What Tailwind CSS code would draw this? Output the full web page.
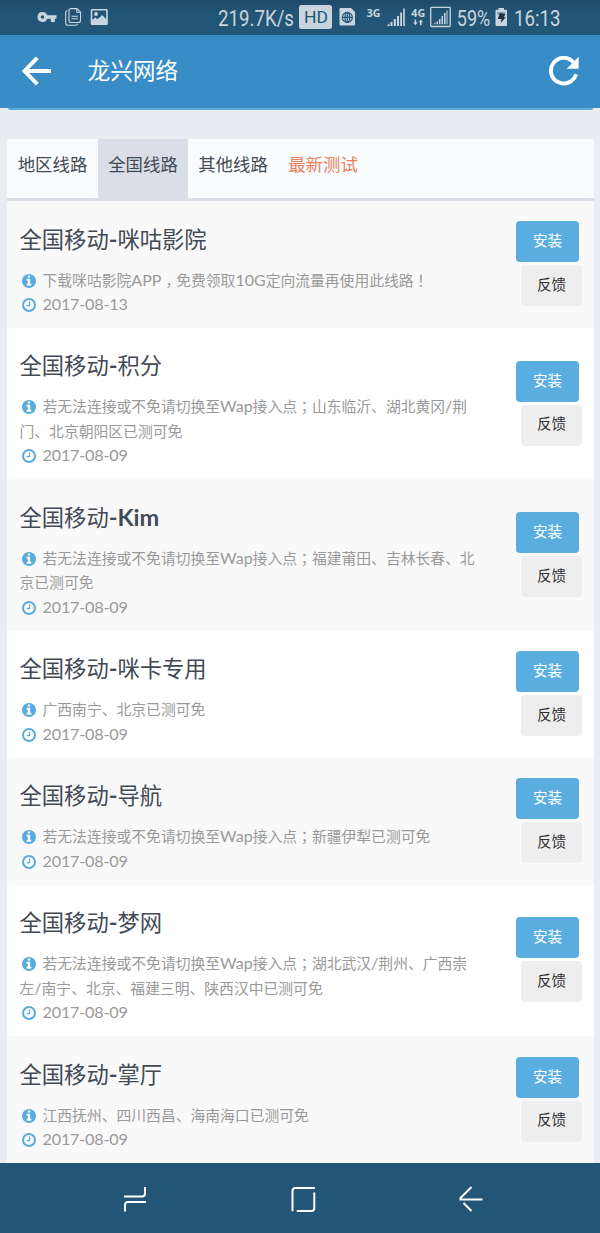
<!DOCTYPE html>
<html lang="zh-CN">
<head>
  <meta charset="UTF-8" />
  <meta name="viewport" content="width=device-width, initial-scale=1.0" />
  <title>龙兴网络</title>
  <script src="https://cdn.jsdelivr.net/npm/@tailwindcss/browser@4"></script>
</head>
<body class="w-[600px] h-[1233px] overflow-hidden flex flex-col bg-[#e9edf2] font-['Lato','Noto_Sans_CJK_SC',sans-serif] text-[#434a54]">

  <!-- status bar -->
  <div class="h-[35px] shrink-0 flex justify-between bg-linear-to-b from-[#1f4a68] to-[#235577] to-40%">
    <svg width="120" height="35" viewBox="0 0 120 35" fill="#c8d5df">
      <path fill-rule="evenodd" d="M42.5 12a5 5 0 1 0 4.7 6.8h3.6V22h4v-3.200h1.700v-3.600h-9.300A5 5 0 0 0 42.500 12zm0 3.200a1.800 1.800 0 1 1 0 3.600 1.800 1.800 0 0 1 0-3.600z" />
      <g fill="none" stroke="#c8d5df" stroke-width="1.100">
        <path d="M71 8.600h6l3.500 3.700v8.200q0 2-2 2h-7.500q-2 0-2-2v-9.900q0-2 2-2z" />
        <path d="M76.800 8.600v3.700h3.700M67.500 10.500q-1.800.3-1.800 2v10.700q0 2 2 2h7.800q1.800 0 2-1.500" />
        <path d="M71.500 16.200h6.500M71.500 18.800h6.500" />
      </g>
      <path fill-rule="evenodd" d="M92 9h14.500q1.300 0 1.300 1.300v13.400q0 1.300-1.300 1.300H92q-1.300 0-1.300-1.300V10.300Q90.700 9 92 9zm.3 1.600v9.500l3-2.600 2.200 1.800 4.700-4.300 4 4.200v-8.600z" />
      <circle cx="96" cy="14" r="1.900" />
    </svg>
    <svg width="390" height="35" viewBox="210 0 390 35" fill="#c8d5df" class="font-['Roboto',sans-serif]">
      <text transform="translate(218 25.5) scale(.85 1)" font-size="22" textLength="89.4" lengthAdjust="spacingAndGlyphs">219.7K/s</text>
      <rect x="299" y="5" width="33" height="24" rx="2.500" />
      <text x="304" y="22.800" font-size="16.500" textLength="24" lengthAdjust="spacingAndGlyphs" fill="#235577">HD</text>
      <path d="M340.500 8h10.500l4 4v12.500q0 1-1 1h-13.500q-1 0-1-1V9q0-1 1-1z" />
      <g fill="none" stroke="#235577" stroke-width="1.200">
        <circle cx="347.300" cy="17.400" r="5" />
        <ellipse cx="347.300" cy="17.400" rx="2.300" ry="5" />
        <path d="M342.300 17.400h10M347.300 12.400v10" />
      </g>
      <text x="366.700" y="17" font-size="10.500" font-weight="700" textLength="13.600" lengthAdjust="spacingAndGlyphs" class="font-['Noto_Sans']">3G</text>
      <path d="M387 26l2.500-3v3zM390.500 22h2v4h-2zM393.800 19h2v7h-2zM397 16h2v10h-2zM400.200 12.500h1.800V26h-1.800zM403.200 8.500h1.600V26h-1.600z" />
      <text x="411.300" y="17" font-size="10.500" font-weight="700" textLength="13.800" lengthAdjust="spacingAndGlyphs" class="font-['Noto_Sans']">4G</text>
      <path d="M414.600 19.500h1.600v3h1.500l-2.300 2.700-2.300-2.700h1.500zM420 25.200h1.600v-3h1.500l-2.300-2.700-2.300 2.700h1.500z" />
      <rect x="430.700" y="7.300" width="19.500" height="19.200" rx=".8" fill="none" stroke="#c8d5df" stroke-width="1.300" />
      <path d="M433.500 24.300l2-2v2zM436.500 21.500h1.500v2.800h-1.500zM439 19h1.500v5.300H439zM441.500 16h1.500v8.300h-1.500zM444 13h1.500v11.300H444zM446.500 10.500h1v13.800h-1z" />
      <text x="456.800" y="25.500" font-size="22" textLength="33.500" lengthAdjust="spacingAndGlyphs">59%</text>
      <path d="M498.500 8h5.500v1.800h2.200q.8 0 .8.800v14.600q0 .8-.8.800h-9.900q-.8 0-.8-.8V10.600q0-.8.800-.8h2.200z" />
      <path d="M497.300 12h8v3h-8z" fill="#8199aa" />
      <path d="M500 13l5.300 1.200-1.300 3h1.800l-5.300 6 1-4.300h-3.800z" fill="#1f3442" />
      <text x="514" y="25.500" font-size="22" textLength="46.500" lengthAdjust="spacingAndGlyphs">16:13</text>
    </svg>
  </div>

  <!-- title bar -->
  <header class="h-[72.5px] shrink-0 flex items-center pl-[22px] pr-[20px] bg-[#388dc6] text-white">
    <svg width="30" height="30" viewBox="0 0 30 30" fill="none" stroke="currentColor" stroke-width="3.900">
      <path d="M29 15H3M15.300 1.800L2.500 15l12.800 13.200" />
    </svg>
    <h1 class="ml-[35.5px] pt-[1px] text-[22.7px] leading-none">龙兴网络</h1>
    <svg class="ml-auto" width="32" height="30" viewBox="0 0 32 30" fill="none">
      <path d="M25.300 6.200A12.800 12.800 0 1 0 28 18.200" stroke="currentColor" stroke-width="3.900" />
      <path d="M30.700.8v12H18.700z" fill="currentColor" />
    </svg>
  </header>
  <div class="h-[2.5px] shrink-0 mx-[7.5px] rounded-bl-sm rounded-br-sm bg-[#5aabdd]"></div>

  <main class="flex-1 min-h-0 mt-[29px] ml-[7px] mr-[6.5px] overflow-hidden">
    <nav class="h-[62px] flex border-b-[3px] border-[#d9dee8] bg-[#fafbfd] text-[17.4px] leading-[52px] rounded-t-xs whitespace-nowrap">
      <a class="w-[91px] text-center">地区线路</a>
      <a class="w-[90px] text-center bg-[#d9dee8]">全国线路</a>
      <a class="w-[90px] text-center">其他线路</a>
      <a class="w-[90px] text-center text-[#e9815c]">最新测试</a>
    </nav>
    <div id="list"></div>
  </main>

  <!-- system navigation -->
  <footer class="h-[70px] shrink-0 flex items-center justify-between pl-[120px] pr-[114px] pb-[1px] bg-[#235577] text-white">
    <svg width="30" height="30" viewBox="0 0 30 30" fill="none" stroke="currentColor" stroke-width="2">
      <path d="M4 13.500h18q3 0 3-3V4M26 19H8q-3 0-3 3v6.500" />
    </svg>
    <svg width="30" height="30" viewBox="0 0 30 30" fill="none" stroke="currentColor" stroke-width="2">
      <path d="M4.500 28.300V8q0-3 3-3h19.300M26.300 9.500V25q0 3-3 3H8.800" />
    </svg>
    <svg width="30" height="30" viewBox="0 0 30 30" fill="none" stroke="currentColor" stroke-width="2">
      <path d="M15.500 4L4.500 15v1.500h22M7.500 20l8 8" />
    </svg>
  </footer>

  <script>
    const lines = [
      { name: "咪咕影院", date: "2017-08-13", desc: ["下载咪咕影院APP，免费领取10G定向流量再使用此线路！"] },
      { name: "积分", date: "2017-08-09", desc: ["若无法连接或不免请切换至Wap接入点；山东临沂、湖北黄冈/荆", "门、北京朝阳区已测可免"] },
      { name: "Kim", date: "2017-08-09", desc: ["若无法连接或不免请切换至Wap接入点；福建莆田、吉林长春、北", "京已测可免"] },
      { name: "咪卡专用", date: "2017-08-09", desc: ["广西南宁、北京已测可免"] },
      { name: "导航", date: "2017-08-09", desc: ["若无法连接或不免请切换至Wap接入点；新疆伊犁已测可免"] },
      { name: "梦网", date: "2017-08-09", desc: ["若无法连接或不免请切换至Wap接入点；湖北武汉/荆州、广西崇", "左/南宁、北京、福建三明、陕西汉中已测可免"] },
      { name: "掌厅", date: "2017-08-09", desc: ["江西抚州、四川西昌、海南海口已测可免"] },
    ];

    const info = `<svg class="inline-block align-[-2px] ml-[2.5px] mr-[6.5px] text-[#5aabdd]" width="14" height="14" viewBox="128 128 1536 1536" fill="currentColor"><path d="M1152 1376v-160q0-14-9-23t-23-9h-96v-512q0-14-9-23t-23-9h-320q-14 0-23 9t-9 23v160q0 14 9 23t23 9h96v320h-96q-14 0-23 9t-9 23v160q0 14 9 23t23 9h448q14 0 23-9t9-23zm-128-896v-160q0-14-9-23t-23-9h-192q-14 0-23 9t-9 23v160q0 14 9 23t23 9h192q14 0 23-9t9-23zm640 416q0 209-103 385.5t-279.5 279.5-385.500 103-385.500-103-279.500-279.500-103-385.500 103-385.500 279.500-279.500 385.500-103 385.500 103 279.500 279.500 103 385.500z"/></svg>`;
    const clock = `<svg class="inline-block align-[-2px] ml-[2.5px] mr-[6.5px] text-[#5aabdd]" width="14" height="14" viewBox="128 128 1536 1536" fill="currentColor"><circle cx="896" cy="896" r="656" fill="none" stroke="currentColor" stroke-width="224"/><path d="M1024 544v448q0 14-9 23t-23 9h-320q-14 0-23-9t-9-23v-64q0-14 9-23t23-9h224v-352q0-14 9-23t23-9h64q14 0 23 9t9 23z"/></svg>`;

    // latin runs are a touch larger than the hanzi, full-width marks sit in the middle of their box
    const format = s => s
      .replace(/[A-Za-z0-9/]+|，|[；！]/g, m =>
        m === "，" ? `<span class="relative left-[4px]">，</span>`
        : /[；！]/.test(m) ? `<span class="font-['Noto_Sans_CJK_TC']" lang="zh-TW">${m}</span>`
        : `<span class="text-[16px] leading-none">${m}</span>`);
    const bold = s => s.replace(/[A-Za-z-]+/g, `<b class="font-bold text-[23.5px] leading-none">$&</b>`);

    document.getElementById("list").innerHTML = lines.map((l, i) => `
      <div class="flex items-center justify-between pl-[12.5px] pr-[11.5px] ${l.desc.length > 1 ? "h-[151.6px]" : "h-[126.8px]"} ${i % 2 ? "bg-white" : "bg-[#f9f9f9]"}">
        <div class="self-start pt-[22.5px] whitespace-nowrap">
          <h4 class="h-[32px] text-[22.3px] leading-[32px] font-normal">${bold("全国移动-" + l.name)}</h4>
          <p class="mt-[12px] text-[14.8px] leading-[24.6px] text-[#999]">${info}${l.desc.map(format).join("<br>")}</p>
          <p class="text-[16.2px] leading-[24.6px] tracking-[-0.2px] text-[#999]">${clock}${l.date}</p>
        </div>
        <div class="flex flex-col gap-[3px] pb-[1px] text-[14.6px] leading-[38px] text-center">
          <button class="w-[63px] h-[41px] pb-[1px] -ml-[5px] rounded-[4px] bg-[#5aaddf] text-white">安装</button>
          <button class="w-[61px] h-[41px] pb-[2px] rounded-[4px] bg-[#eee] text-[#333]">反馈</button>
        </div>
      </div>`).join("");
  </script>
</body>
</html>
